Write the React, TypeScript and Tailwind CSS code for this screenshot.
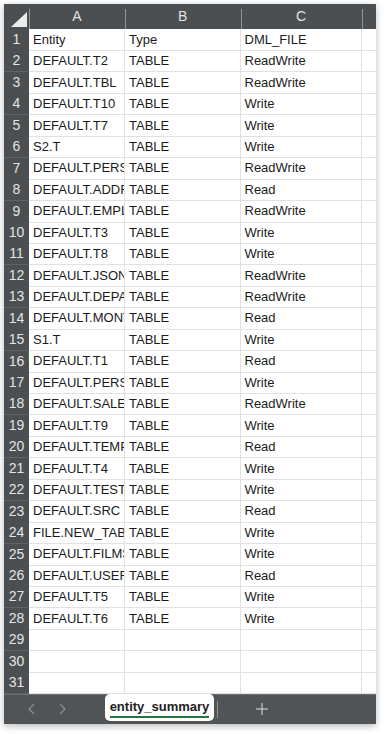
import React from "react";

const rows: [string, string, string][] = [
  ["Entity", "Type", "DML_FILE"],
  ["DEFAULT.T2", "TABLE", "ReadWrite"],
  ["DEFAULT.TBL", "TABLE", "ReadWrite"],
  ["DEFAULT.T10", "TABLE", "Write"],
  ["DEFAULT.T7", "TABLE", "Write"],
  ["S2.T", "TABLE", "Write"],
  ["DEFAULT.PERSONS", "TABLE", "ReadWrite"],
  ["DEFAULT.ADDRESS", "TABLE", "Read"],
  ["DEFAULT.EMPLOYEE", "TABLE", "ReadWrite"],
  ["DEFAULT.T3", "TABLE", "Write"],
  ["DEFAULT.T8", "TABLE", "Write"],
  ["DEFAULT.JSON_TBL", "TABLE", "ReadWrite"],
  ["DEFAULT.DEPARTMENT", "TABLE", "ReadWrite"],
  ["DEFAULT.MONTHLY", "TABLE", "Read"],
  ["S1.T", "TABLE", "Write"],
  ["DEFAULT.T1", "TABLE", "Read"],
  ["DEFAULT.PERSONS2", "TABLE", "Write"],
  ["DEFAULT.SALES", "TABLE", "ReadWrite"],
  ["DEFAULT.T9", "TABLE", "Write"],
  ["DEFAULT.TEMP", "TABLE", "Read"],
  ["DEFAULT.T4", "TABLE", "Write"],
  ["DEFAULT.TEST", "TABLE", "Write"],
  ["DEFAULT.SRC", "TABLE", "Read"],
  ["FILE.NEW_TABLE", "TABLE", "Write"],
  ["DEFAULT.FILMS", "TABLE", "Write"],
  ["DEFAULT.USERS", "TABLE", "Read"],
  ["DEFAULT.T5", "TABLE", "Write"],
  ["DEFAULT.T6", "TABLE", "Write"],
  ["", "", ""],
  ["", "", ""],
  ["", "", ""],
];

const font = { fontFamily: '"Liberation Sans", Arial, sans-serif' };

export default function App() {
  return (
    <div className="w-[386px] h-[734px] bg-white pt-[4px] pl-[4px]" style={font}>
      <div className="w-[372px] h-[720px] flex flex-col bg-white shadow-[0_2px_7px_rgba(0,0,0,0.28)] overflow-hidden">
        {/* column header */}
        <div className="grid grid-cols-[25px_96px_115.5px_121px_14.5px] h-[25px] bg-[#4b4f51] shrink-0">
          <div className="relative">
            <svg className="absolute right-[2px] bottom-[2px]" width="16" height="15" viewBox="0 0 16 15">
              <polygon points="16,0 16,15 0,15" fill="#ececec" />
            </svg>
          </div>
          {["A", "B", "C", ""].map((l, i) => (
            <div key={i} className="relative flex items-center justify-center text-[14px] text-[#e2e2e2]">
              <div className="absolute left-0 top-[5px] bottom-0 w-px bg-[#8f9293]" />
              {l}
            </div>
          ))}
        </div>
        {/* body */}
        <div className="flex flex-col shrink-0">
          {rows.map((r, i) => (
            <div key={i} className="grid grid-cols-[25px_96px_115.5px_121px_14.5px] h-[21.45px]">
              <div className="relative flex items-center justify-center bg-[#4b4f51] text-[#e4e4e4] text-[14px] border-b border-[#5f6365]">
                {i + 1}
                {i === 15 && <div className="absolute right-0 top-0 h-[11px] w-px bg-[#1e8a44]" />}
              </div>
              {r.map((c, j) => (
                <div
                  key={j}
                  className="flex items-center pl-[4px] text-[13px] text-[#1b1b1b] whitespace-nowrap overflow-hidden border-r border-b border-[#e1e1e1]"
                >
                  {c}
                </div>
              ))}
              <div className="border-b border-[#e1e1e1]" />
            </div>
          ))}
        </div>
        {/* tab bar */}
        <div className="flex-1 flex items-stretch bg-[#505456] border-t border-[#6a6e70]">
          <div className="w-[101px] flex items-center pl-[20px] gap-[14px] text-[#8d9193]">
            <svg width="16" height="16" viewBox="0 0 16 16" fill="none" stroke="currentColor" strokeWidth="1.2">
              <polyline points="10,3 5,8 10,13" />
            </svg>
            <svg width="16" height="16" viewBox="0 0 16 16" fill="none" stroke="currentColor" strokeWidth="1.2">
              <polyline points="6,3 11,8 6,13" />
            </svg>
          </div>
          <div className="w-[109px] mb-[3px] -mt-px bg-white rounded-[5px] flex items-center justify-center">
            <span className="relative text-[13px] font-bold text-[#222] leading-none pb-[2px]">
              entity_summary
              <span className="absolute left-0 right-0 -bottom-[3px] h-[2px] bg-[#1d7a3c]" />
            </span>
          </div>
          <div className="w-px bg-[#8f9293] my-[6px] ml-[3px]" />
          <div className="w-[88px] flex items-center justify-center text-[#c9cbcc]">
            <svg width="14" height="14" viewBox="0 0 14 14" stroke="currentColor" strokeWidth="1.2">
              <line x1="7" y1="1" x2="7" y2="13" />
              <line x1="1" y1="7" x2="13" y2="7" />
            </svg>
          </div>
        </div>
      </div>
    </div>
  );
}
